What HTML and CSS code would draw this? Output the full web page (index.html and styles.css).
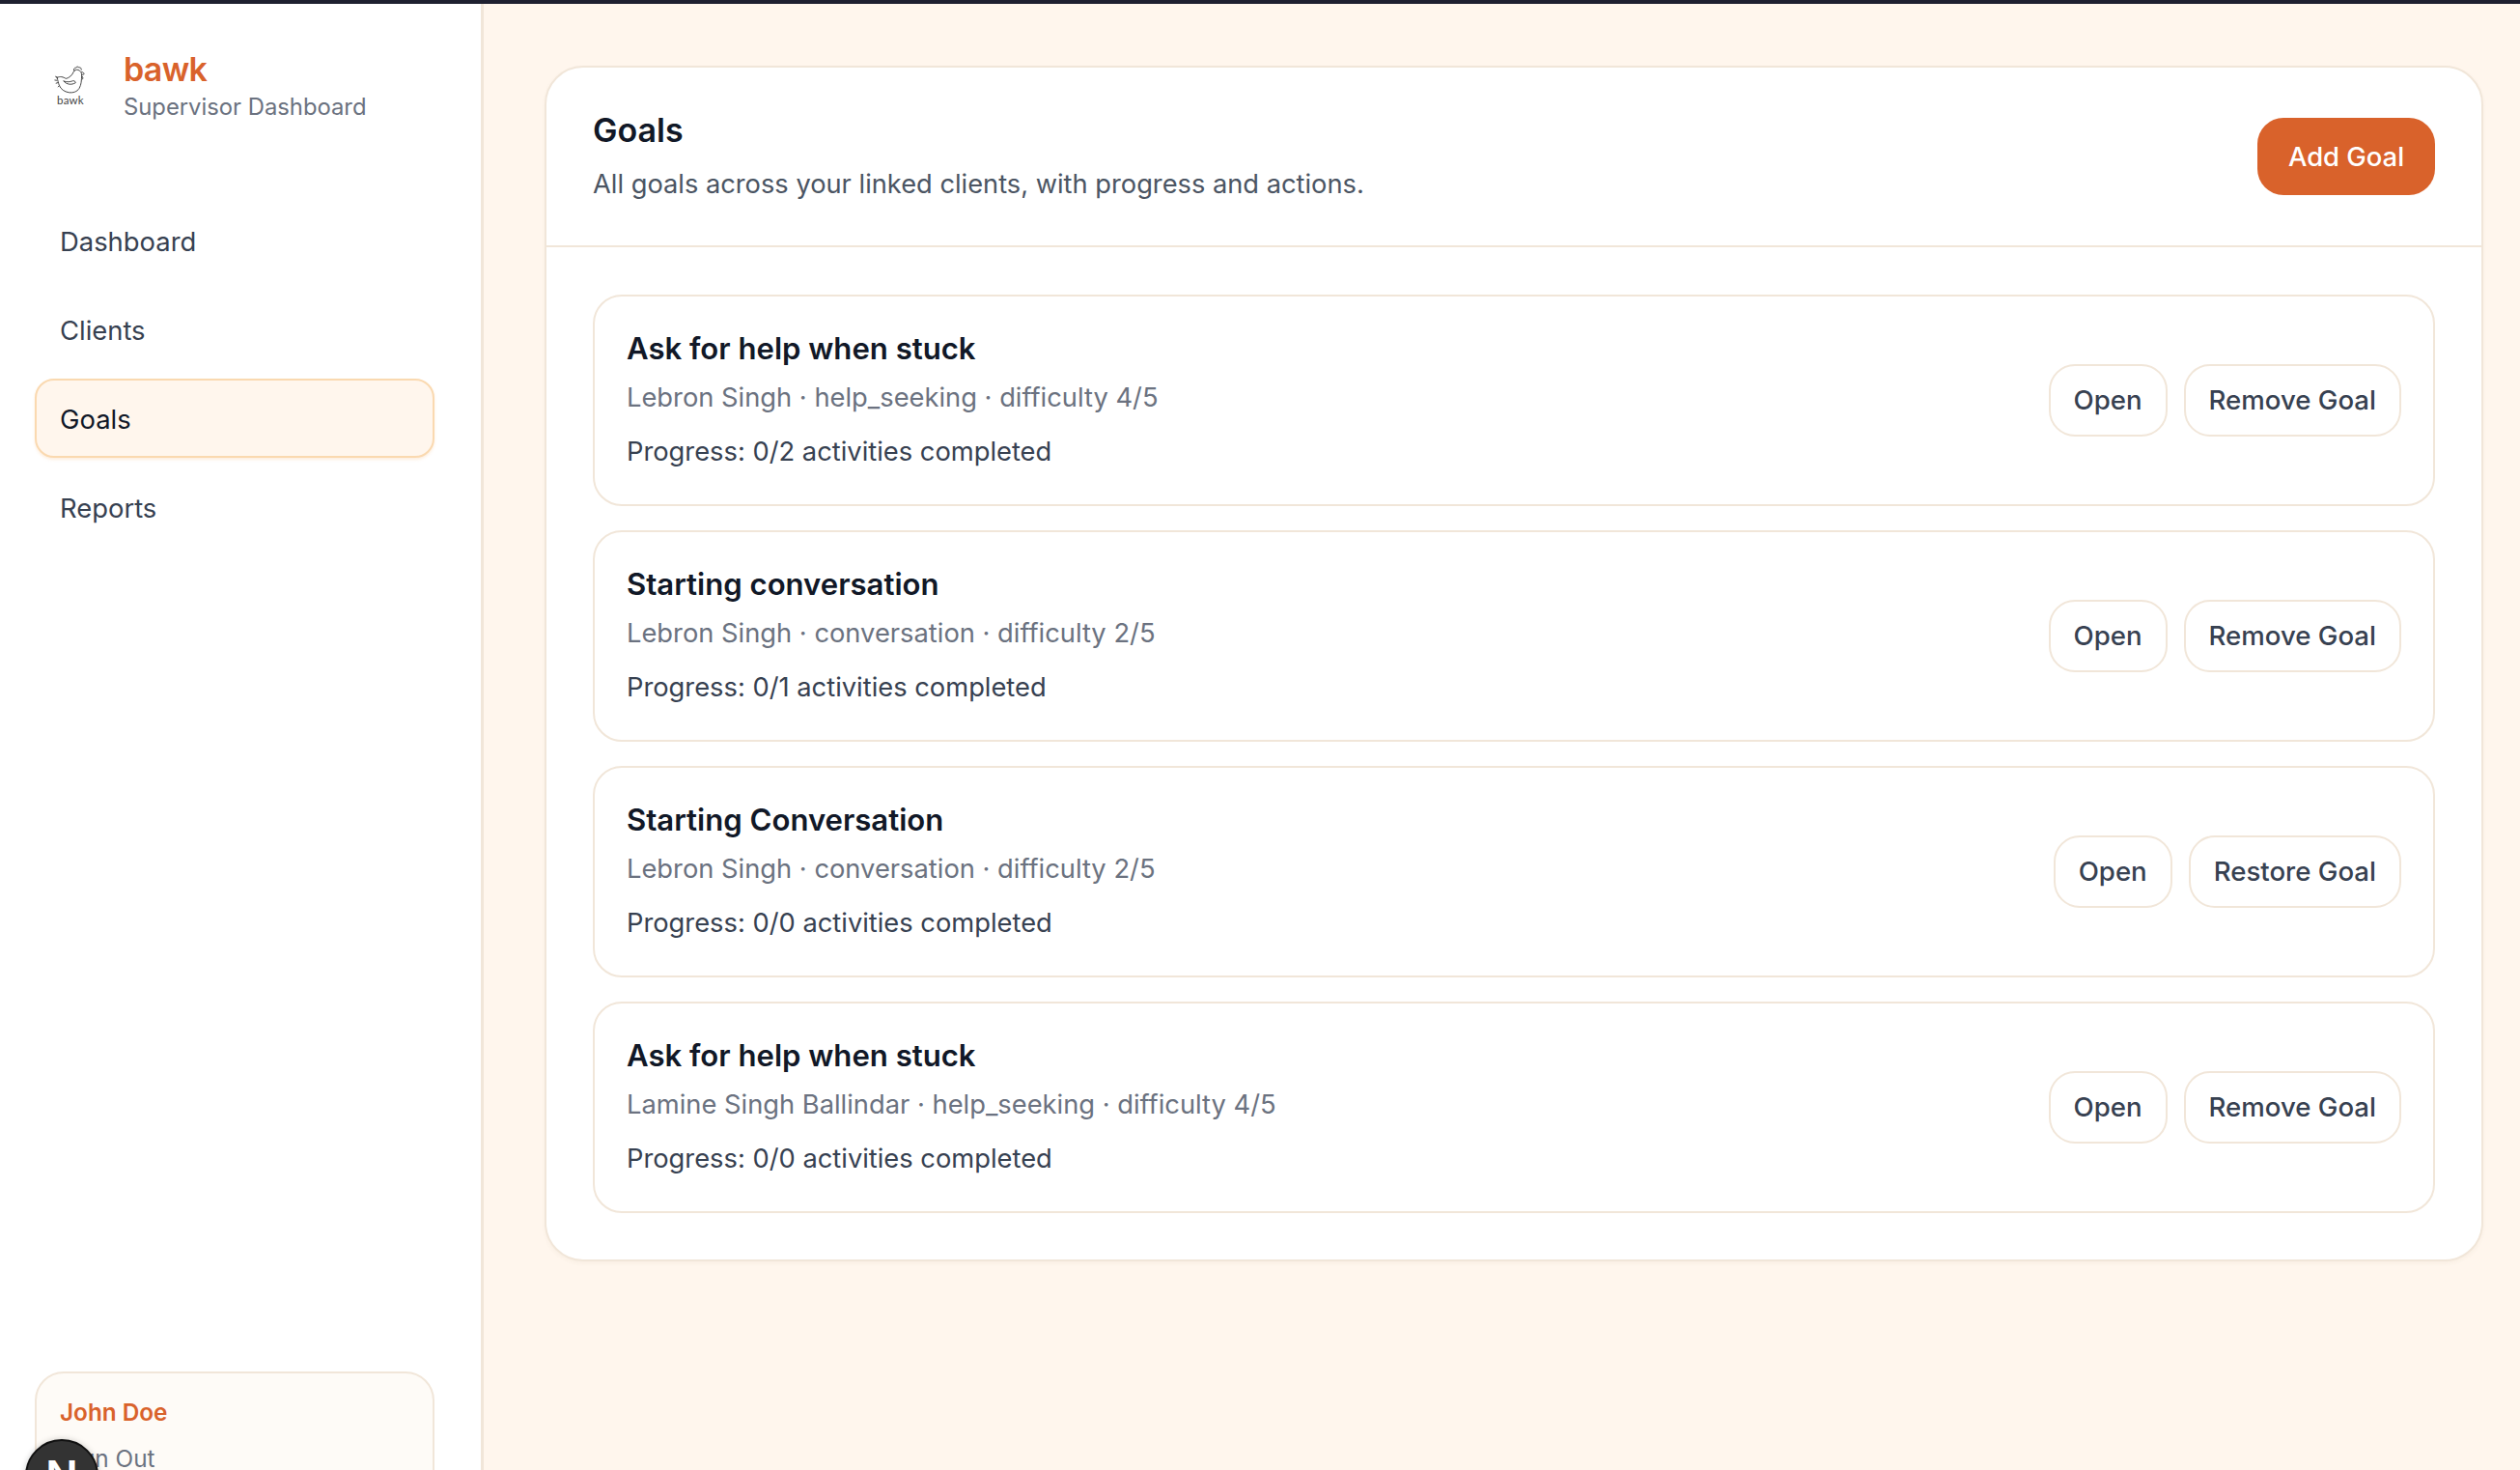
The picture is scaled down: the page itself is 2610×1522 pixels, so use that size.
FILE: index.html
```html
<!DOCTYPE html>
<html lang="en">
<head>
<meta charset="utf-8">
<title>bawk - Goals</title>
<link rel="stylesheet" href="styles.css">
</head>
<body>
<div class="topbar"></div>
<div class="app">
  <aside class="sidebar">
    <div class="brand">
      <div class="logo">
        <svg class="hen" viewBox="0 0 32 28" fill="none" stroke="#3f3f3f" stroke-width="0.9" stroke-linecap="round" stroke-linejoin="round">
          <path d="M3 11.500c3-1.600 6-.6 8.500 1 3-.6 6-3 7.500-6.500.6-1.600 2.800-2.700 4.500-2 2.300.8 3.700 3 3.400 5.500-.1 4.500-.3 9-2.400 12.500-2 3.300-6 4.500-10 4-4.500-.6-8-3.300-9.500-7-.6-1.600-1.400-4.700-2-7.500z"/>
          <path d="M19.500 5c-.9-1.700.3-3.400 1.800-3 .3-1.300 2.300-1.500 3-.3 1.300-.4 2.700.7 2.300 2.200"/>
          <path d="M27 6c1.300.2 2.200 1 2.300 2-.7.7-1.500.8-2.300.6"/>
          <path d="M27.200 10c1 .7 1.200 1.800.6 3"/>
          <path d="M9.500 15c2.500 3.300 7.500 4 11.500 1.500-.3-1.800-2-2.300-3.700-1.500-2 .7-4.500 1-7.800 0z"/>
          <path d="M1.500 10.500l1.500.6M.8 14l1.800.2M2 17l1.500-.5M4 20.500l1-1"/>
        </svg>
        <span class="logo-word">bawk</span>
      </div>
      <div class="brand-text">
        <div class="brand-name">bawk</div>
        <div class="brand-sub">Supervisor Dashboard</div>
      </div>
    </div>
    <nav class="nav">
      <a class="nav-item">Dashboard</a>
      <a class="nav-item">Clients</a>
      <a class="nav-item is-active">Goals</a>
      <a class="nav-item">Reports</a>
    </nav>
    <div class="user-box">
      <div class="user-name">John Doe</div>
      <div class="user-signout">Sign Out</div>
    </div>
  </aside>
  <main class="main">
    <section class="panel">
      <header class="panel-head">
        <div>
          <h1 class="panel-title">Goals</h1>
          <p class="panel-sub">All goals across your linked clients, with progress and actions.</p>
        </div>
        <button class="btn-primary">Add Goal</button>
      </header>
      <div class="goal-list">
        <article class="goal">
          <div class="goal-info">
            <h2 class="goal-title">Ask for help when stuck</h2>
            <div class="goal-meta">Lebron Singh · help_seeking · difficulty 4/5</div>
            <div class="goal-progress">Progress: 0/2 activities completed</div>
          </div>
          <div class="goal-actions"><button class="btn">Open</button><button class="btn">Remove Goal</button></div>
        </article>
        <article class="goal">
          <div class="goal-info">
            <h2 class="goal-title">Starting conversation</h2>
            <div class="goal-meta">Lebron Singh · conversation · difficulty 2/5</div>
            <div class="goal-progress">Progress: 0/1 activities completed</div>
          </div>
          <div class="goal-actions"><button class="btn">Open</button><button class="btn">Remove Goal</button></div>
        </article>
        <article class="goal">
          <div class="goal-info">
            <h2 class="goal-title">Starting Conversation</h2>
            <div class="goal-meta">Lebron Singh · conversation · difficulty 2/5</div>
            <div class="goal-progress">Progress: 0/0 activities completed</div>
          </div>
          <div class="goal-actions"><button class="btn">Open</button><button class="btn">Restore Goal</button></div>
        </article>
        <article class="goal">
          <div class="goal-info">
            <h2 class="goal-title">Ask for help when stuck</h2>
            <div class="goal-meta">Lamine Singh Ballindar · help_seeking · difficulty 4/5</div>
            <div class="goal-progress">Progress: 0/0 activities completed</div>
          </div>
          <div class="goal-actions"><button class="btn">Open</button><button class="btn">Remove Goal</button></div>
        </article>
      </div>
    </section>
  </main>
</div>
<div class="dev-badge"><span class="dev-n">N</span></div>
</body>
</html>
```
FILE: styles.css
```css
* { box-sizing: border-box; }
html, body { margin: 0; height: 100%; overflow: hidden; }
body { font-family: Inter, "Liberation Sans", sans-serif; background: #fff6ed; color: #111827; position: relative; }
.topbar { height: 4px; background: #1e2030; }
.app { display: flex; height: 1518px; }
.sidebar { width: 501px; flex: none; background: #fff; border-right: 3px solid #f1e6d9; padding: 0 48px 0 36px; display: flex; flex-direction: column; overflow: hidden; }
.brand { display: flex; align-items: flex-start; height: 180px; padding-top: 48px; }
.logo { width: 92px; padding-left: 20px; display: flex; flex-direction: column; align-items: flex-start; margin-top: 16px; }
.hen { width: 34px; height: 30px; display: block; }
.logo-word { font-family: Lato, sans-serif; font-size: 11.5px; line-height: 11px; color: #444; width: 34px; text-align: center; letter-spacing: .2px; }
.brand-name { font-size: 34px; line-height: 40px; font-weight: 600; color: #d9622b; letter-spacing: -.7px; }
.brand-sub { font-size: 23.8px; line-height: 33px; color: #6b7280; margin-top: 2px; }
.nav { display: flex; flex-direction: column; gap: 10px; margin-top: 24px; }
.nav-item { display: block; height: 82px; line-height: 80px; padding: 0 24px; border: 2.500px solid transparent; border-radius: 20px; font-size: 27.4px; color: #374151; }
.nav-item.is-active { background: #fff6ed; border-color: #fad9b0; color: #111827; box-shadow: 0 2px 3px rgba(250, 200, 150, .3); }
.user-box { margin-top: auto; margin-bottom: -40px; height: 142px; background: #fefbf7; border: 2.500px solid #f1e6d9; border-radius: 30px; padding: 24px 24px; flex: none; }
.user-name { font-size: 24.3px; line-height: 32px; font-weight: 600; color: #d9622b; }
.user-signout { font-size: 24.3px; line-height: 32px; color: #6b7280; margin-top: 16px; }
.main { flex: 1; padding: 64px 38px 0 63px; min-width: 0; }
.panel { background: #fff; border: 2.500px solid #f1e6d9; border-radius: 40px; box-shadow: 0 2px 4px rgba(120, 90, 50, .05); }
.panel-head { height: 186px; display: flex; justify-content: space-between; align-items: center; padding: 0 48px; border-bottom: 2.500px solid #f1e6d9; }
.panel-title { margin: 0; font-size: 34px; line-height: 44px; font-weight: 600; color: #111827; }
.panel-sub { margin: 14px 0 0; font-size: 27.25px; line-height: 40px; color: #4b5563; }
.btn-primary { width: 184px; height: 80px; border: 0; border-radius: 27px; background: #d9622b; color: #fff; font: 500 27.4px Inter, sans-serif; }
.goal-list { display: flex; flex-direction: column; gap: 25px; padding: 48.500px 48px; }
.goal { height: 219px; display: flex; justify-content: space-between; align-items: center; padding: 0 33px; border: 2.500px solid #f1e6d9; border-radius: 30px; background: #fff; }
.goal-title { margin: 0; font-size: 31.1px; line-height: 42px; font-weight: 600; color: #111827; }
.goal-meta { font-size: 27.3px; line-height: 40px; color: #6b7280; margin-top: 10px; }
.goal-progress { font-size: 27.3px; line-height: 40px; color: #374151; margin-top: 16px; }
.goal-actions { display: flex; gap: 17px; }
.btn { height: 75px; padding: 0 24px; background: #fff; border: 2.500px solid #f1e6d9; border-radius: 27px; color: #374151; font: 500 27.6px Inter, sans-serif; }
.dev-badge { position: absolute; left: 26px; top: 1490px; width: 76px; height: 76px; border-radius: 50%; background: #333; border: 2px solid #111; box-shadow: 0 0 6px rgba(0, 0, 0, .2); display: flex; align-items: center; justify-content: center; overflow: hidden; }
.dev-n { color: #fff; font-size: 44px; font-weight: 600; line-height: 1; }
```
